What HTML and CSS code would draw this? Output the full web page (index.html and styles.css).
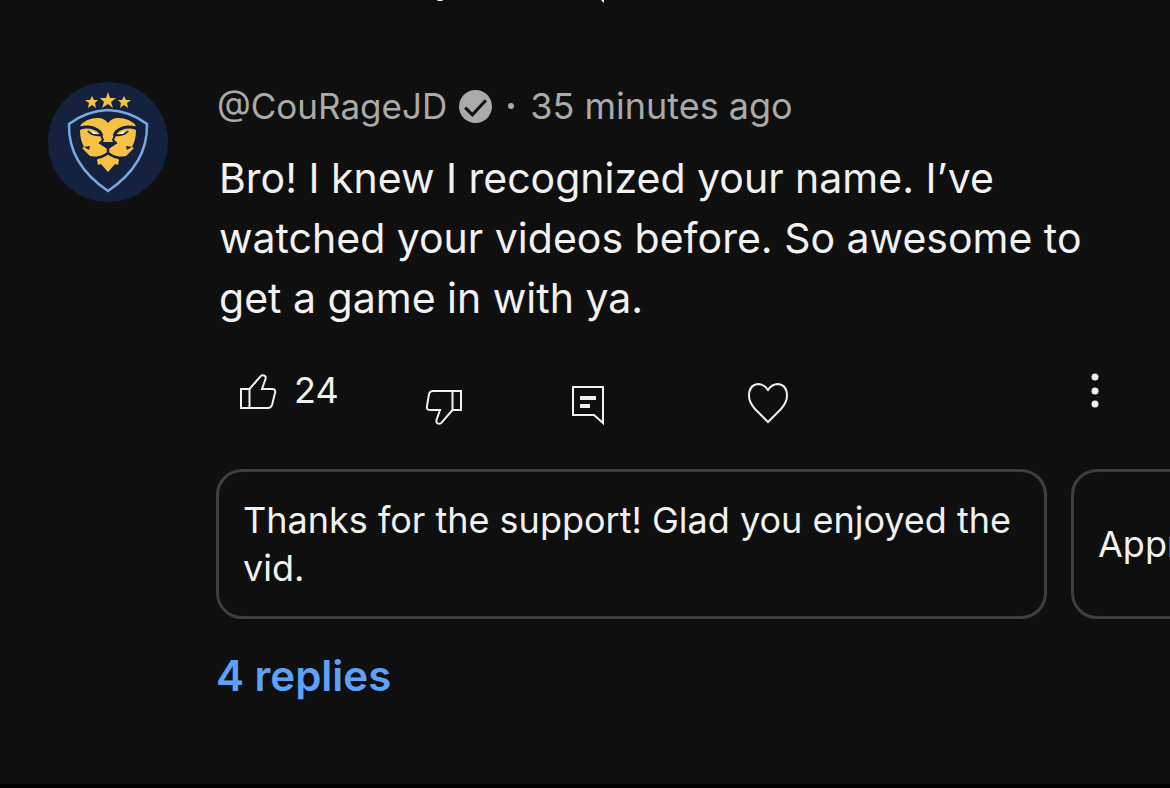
FILE: index.html
```
<!DOCTYPE html>
<html lang="en">
<head>
  <meta charset="UTF-8">
  <meta name="viewport" content="width=device-width, initial-scale=1.0">
  <title>Comments</title>
  <link rel="stylesheet" href="styles.css">
</head>
<body>
  <!-- End of the previous comment -->
  <div class="previous">
    <svg class="previous-tail" viewBox="0 0 180 4" aria-hidden="true">
      <path d="M1 0h6l-1 1h-4zM165 0h3v3z"/>
    </svg>
  </div>

  <main class="comment">
    <a class="avatar" href="#" aria-label="CouRageJD">
      <svg viewBox="0 0 120 120" aria-hidden="true">
        <circle cx="60" cy="60" r="60" fill="#14213f"/>
        <!-- Stars -->
        <g fill="#f6c244">
          <path d="M60 10l2 6h6l-5 4 2 6-5-4-6 4 2-6-4-4h6z"/>
          <path d="M44 14l2 4h4l-3 3 1 5-4-3-4 3 1-5-4-3h5z"/>
          <path d="M76 14l2 4h5l-4 3 1 5-4-3-4 3 1-5-3-3h4z"/>
        </g>
        <!-- Shield -->
        <path d="M21 42Q38 29 60 28Q82 29 99 42Q100 82 60 109Q20 82 21 42z" fill="none" stroke="#78a9df" stroke-width="2.5"/>
        <!-- Lion -->
        <path d="M60 41Q64 36 70 36Q82 36 88 44L84 46L88 48Q88 58 84 65L86 66L78 74L71 75L68 74L71 78L70 83L67 82L60 90L53 82L50 83L49 78L52 74L49 75L42 74L34 66L36 65Q32 58 32 48L36 46L32 44Q38 36 50 36Q56 36 60 41z" fill="#f6c244"/>
        <g fill="none" stroke="#14213f">
          <path d="M32 46Q44 43 52 50L54 54M88 46Q76 43 68 50L66 54" stroke-width="3"/>
          <path d="M40 49Q44 54 53 53L55 58L52 61L60 66L68 61L65 58L67 53Q76 54 80 49" stroke-width="2"/>
          <path d="M60 65V71M46 76Q54 76 60 71Q66 76 74 76" stroke-width="2.500"/>
        </g>
        <path d="M52 60H68L66 63L60 67L54 63z" fill="#14213f"/>
        <path d="M42 64L41 68L36 65zM78 64L79 68L84 65z" fill="#14213f"/>
        <path d="M43 49L50 52H45zM77 49L70 52H75z" fill="#fff"/>
      </svg>
    </a>

    <div class="comment-body">
      <div class="comment-header">
        <a class="author" href="#">@CouRageJD</a>
        <svg class="verified" viewBox="0 0 32 32" role="img" aria-label="Verified">
          <circle cx="16" cy="16" r="16" fill="#aaa"/>
          <path d="M6 17l7 7L26 10" fill="none" stroke="#0f0f0f" stroke-width="3"/>
        </svg>
        <span class="separator"></span>
        <span class="time">35 minutes ago</span>
      </div>

      <p class="comment-text">Bro! I knew I recognized your name. I’ve watched your videos before. So awesome to get a game in with ya.</p>

      <!-- Actions -->
      <div class="actions">
        <button class="action like" type="button" aria-label="Like">
          <svg class="icon" viewBox="0 -2 40 40" aria-hidden="true">
            <path d="M3 17h8.500v19H3zM11.500 17L22 5Q24 2 27 4Q28 5 27.500 7L24 17H34Q38 17 37 21L34 33Q33 36 30 36H11.500"/>
          </svg>
          <span>24</span>
        </button>
        <button class="action dislike" type="button" aria-label="Dislike">
          <svg class="icon" viewBox="0 -3 40 40" aria-hidden="true">
            <path d="M37 23h-8.500V4H37zM28.500 23L18 35Q16 38 13 36Q12 35 12.500 33L16 23H6Q2 23 3 19L5 7Q6 4 9 4H28.500"/>
          </svg>
        </button>
        <button class="action reply" type="button" aria-label="Reply">
          <svg class="icon" viewBox="0 0 40 40" aria-hidden="true">
            <path d="M5 3H35V39L26 31H5z"/>
            <path class="fill" d="M12 12h16v4H12zM12 20h10v4H12z"/>
          </svg>
        </button>
        <button class="action heart" type="button" aria-label="Heart">
          <svg class="icon" viewBox="0 0 40 40" aria-hidden="true">
            <path d="M20 6Q16 0 10 0Q1 1 1 12Q1 18 7 25L20 38L33 25Q39 18 39 12Q39 1 30 0Q24 0 20 6z"/>
          </svg>
        </button>
        <button class="action more" type="button" aria-label="More options">
          <svg class="icon" viewBox="0 0 40 40" aria-hidden="true">
            <g class="fill"><circle cx="20" cy="9" r="3.500"/><circle cx="20" cy="23" r="3.500"/><circle cx="20" cy="36" r="3.500"/></g>
          </svg>
        </button>
      </div>

      <!-- Suggested replies -->
      <div class="suggestions">
        <button class="suggestion" type="button">Thanks for the support! Glad you enjoyed the vid.</button>
        <button class="suggestion" type="button">Appreciate it!</button>
      </div>

      <a class="replies" href="#">4 replies</a>
    </div>
  </main>
</body>
</html>
```
FILE: styles.css
```
* {
  margin: 0;
  padding: 0;
  box-sizing: border-box;
}

body {
  display: flex;
  flex-direction: column;
  min-height: 100vh;
  background-color: #0f0f0f;
  border-bottom: 4px solid #000;
  color: #f1f1f1;
  font-family: Inter, "Liberation Sans", sans-serif;
  overflow-x: hidden;
}

a {
  color: inherit;
  text-decoration: none;
}

button {
  background: none;
  border: none;
  color: inherit;
  font: inherit;
  cursor: pointer;
}

/* Previous comment */
.previous {
  height: 82px;
  padding-left: 436px;
}

.previous-tail {
  display: block;
  width: 180px;
  height: 4px;
  fill: #f1f1f1;
}

/* Comment */
.comment {
  display: flex;
  gap: 48px;
  padding-left: 48px;
}

.avatar {
  flex: none;
  width: 120px;
  height: 120px;
}

.avatar svg {
  display: block;
}

.comment-body {
  flex: 1;
  min-width: 0;
}

.comment-header {
  display: flex;
  align-items: center;
  height: 48px;
  padding-left: 1px;
  color: #aaa;
  font-size: 36px;
}

.author {
  font-size: 35px;
}

.verified {
  width: 33px;
  height: 33px;
  margin-left: 12px;
}

.separator {
  width: 6px;
  height: 6px;
  margin: 0 16px;
  border-radius: 50%;
  background-color: #aaa;
}

.comment-text {
  padding: 18px 72px 0 3px;
  font-size: 41px;
  line-height: 60px;
}

/* Actions */
.actions {
  display: flex;
  align-items: flex-end;
  margin-top: 40px;
  height: 56px;
  padding-left: 22px;
}

.action {
  display: flex;
  align-items: center;
}

.icon {
  width: 40px;
  height: 40px;
  fill: none;
  stroke: #f1f1f1;
  stroke-width: 2;
  overflow: visible;
}

.fill {
  fill: #f1f1f1;
  stroke: none;
}

.like {
  align-self: flex-start;
  gap: 16px;
  font-size: 36px;
}

.dislike {
  margin-left: 85px;
}

.reply {
  margin-left: 104px;
}

.heart {
  margin-left: 140px;
}

.more {
  align-self: flex-start;
  margin: 0 55px 0 auto;
}

/* Suggested replies */
.suggestions {
  display: flex;
  gap: 24px;
  margin-top: 45px;
  overflow: hidden;
}

.suggestion {
  flex: none;
  max-width: 831px;
  min-height: 150px;
  padding: 24px;
  border: 3px solid #3f3f3f;
  border-radius: 26px;
  font-size: 36px;
  line-height: 48px;
  text-align: left;
}

.replies {
  display: inline-block;
  margin-top: 27px;
  color: #5ea2f7;
  font-size: 42px;
  font-weight: 600;
  line-height: 60px;
}
```
